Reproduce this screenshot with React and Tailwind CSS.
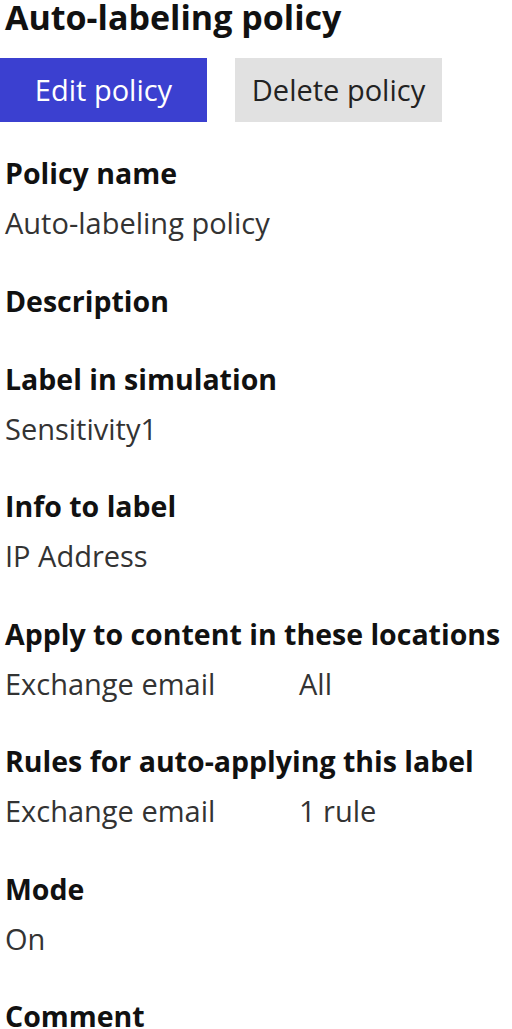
const sections = [
  { label: "Policy name", value: ["Auto-labeling policy"] },
  { label: "Description" },
  { label: "Label in simulation", value: ["Sensitivity1"] },
  { label: "Info to label", value: ["IP Address"] },
  { label: "Apply to content in these locations", value: ["Exchange email", "All"] },
  { label: "Rules for auto-applying this label", value: ["Exchange email", "1 rule"] },
  { label: "Mode", value: ["On"] },
  { label: "Comment" },
];

export default function App() {
  return (
    <div className="w-[512px] bg-white pl-[5px] font-['Open_Sans',sans-serif]">
      {/* TITLE */}
      <h1 className="text-[34px] font-bold leading-[34px] text-[#111] whitespace-nowrap">
        Auto-labeling policy
      </h1>

      {/* ACTIONS */}
      <div className="flex gap-[28px] mt-[24px] -ml-[5px]">
        <button className="w-[207px] h-[64px] bg-[#3b40d0] text-white text-[29px]">
          Edit policy
        </button>
        <button className="w-[207px] h-[64px] bg-[#e1e1e1] text-[#222] text-[29px]">
          Delete policy
        </button>
      </div>

      {/* DETAILS */}
      <div className="mt-[26px]">
        {sections.map((s) => (
          <div key={s.label} className="mb-[28px]">
            <div className="text-[28.5px] font-bold leading-[50px] text-[#111] whitespace-nowrap">
              {s.label}
            </div>
            {s.value && (
              <div className="flex text-[29px] leading-[49.5px] text-[#333] whitespace-nowrap">
                <span className="w-[294px]">{s.value[0]}</span>
                {s.value[1] && <span>{s.value[1]}</span>}
              </div>
            )}
          </div>
        ))}
      </div>
    </div>
  );
}
